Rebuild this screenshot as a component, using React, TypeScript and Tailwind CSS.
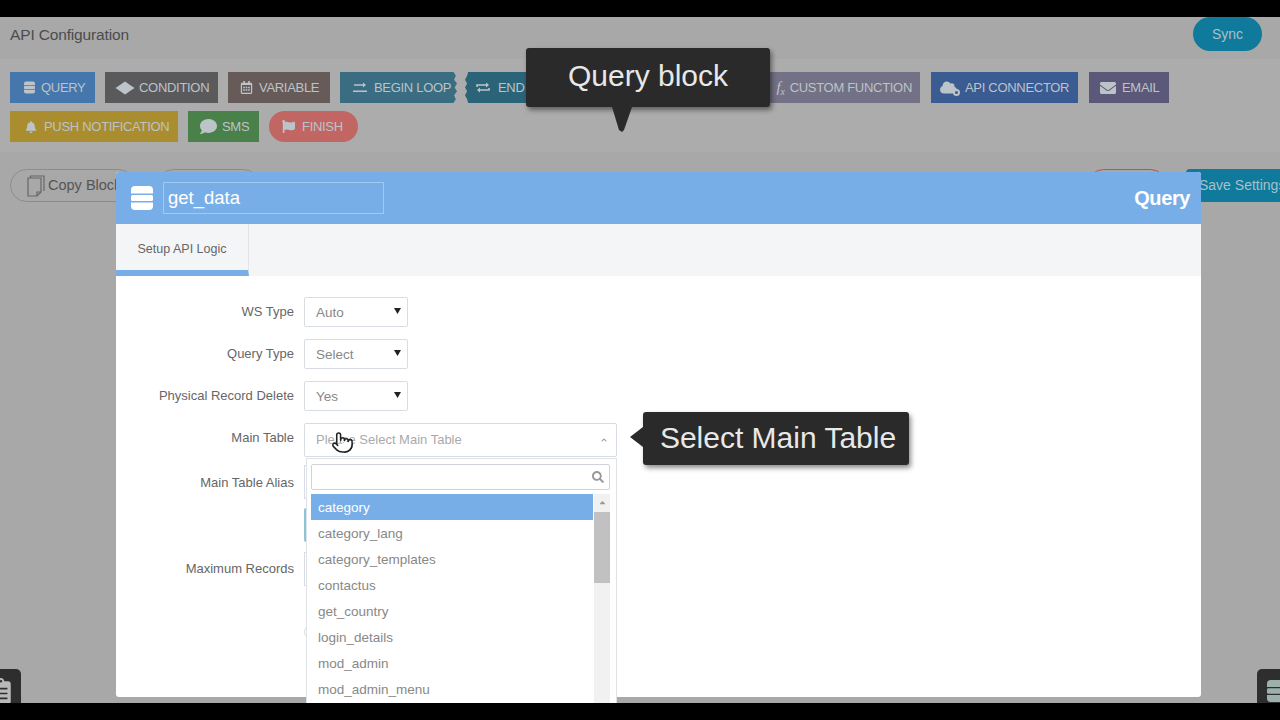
import { Pointer } from "lucide-react";
import {
  FaRegCalendarAlt,
  FaBell,
  FaComment,
  FaFlag,
  FaCloud,
  FaEnvelope,
  FaSearch,
  FaChevronUp,
  FaCaretUp,
  FaClipboardList,
} from "react-icons/fa";

const SANS = "font-['Liberation_Sans',Arial,sans-serif]";

const Diamond = () => (
  <svg width="20" height="14" viewBox="0 0 20 14" className="fill-current">
    <path d="M10 0.5 19.5 7 10 13.5 0.5 7z" />
  </svg>
);

// three stacked disks, flatter than the fa database glyph
const Disks = ({ w, h, className = "" }: { w: number; h: number; className?: string }) => (
  <svg width={w} height={h} viewBox="0 0 22 24" className={`fill-current shrink-0 ${className}`}>
    <path d="M4 0h14a4 4 0 0 1 4 4v3.5H0V4a4 4 0 0 1 4-4z" />
    <rect y="9" width="22" height="6" rx="1.5" />
    <path d="M0 16.5h22V20a4 4 0 0 1-4 4H4a4 4 0 0 1-4-4z" />
  </svg>
);

const LoopIcon = ({ flat = false }: { flat?: boolean }) => (
  <svg width="14" height="11" viewBox="0 0 14 11" fill="none" stroke="currentColor" strokeWidth="1.6" className="shrink-0">
    <path d={flat ? "M1 3h9" : "M1 5V3h9"} />
    <path d="M10 0.5 13 3l-3 2.5z" fill="currentColor" stroke="none" />
    <path d={flat ? "M0 9.2h14" : "M13 6v2H4"} />
    {!flat && <path d="M4 5.500 1 8l3 2.500z" fill="currentColor" stroke="none" />}
  </svg>
);

const CloudGear = () => (
  <span className="relative w-[20px] h-[17px] shrink-0">
    <FaCloud size={17} />
    <span className="absolute right-0 bottom-0 w-[7px] h-[7px] rounded-full border-2 border-current bg-[#3b5b93]" />
  </span>
);

const CopyIcon = () => (
  <svg width="18" height="22" viewBox="0 0 18 22" fill="none" stroke="#666" strokeWidth="1.2" className="shrink-0">
    <path d="M3.5 3V1h13.5v15" />
    <path d="M1 3h13v14l-4 4H1z" />
    <path d="M14 17h-4v4" />
  </svg>
);

const Block = ({ w, bg, icon, label, className = "" }: { w: string; bg: string; icon?: React.ReactNode; label?: string; className?: string }) => (
  <div className={`${w} ${bg} ${className} h-[31px] flex items-center text-[13px] tracking-[-0.3px] text-[#bcc3c9] whitespace-nowrap shrink-0`}>
    {icon}
    {label && <span>{label}</span>}
  </div>
);

const Tooltip = ({ children, className }: { children: React.ReactNode; className: string }) => (
  <div className={`absolute bg-[#2a2a2a] rounded-[3px] shadow-[2px_3px_5px_rgba(0,0,0,0.45)] text-[#e8e8e8] text-[30px] flex items-center justify-center ${className}`}>
    {children}
  </div>
);

const FormRow = ({ label, children, mb = "mb-3", labelClass = "" }: { label: string; children: React.ReactNode; mb?: string; labelClass?: string }) => (
  <div className={`flex items-center ${mb}`}>
    <div className={`w-[178px] text-right text-[13px] text-[#666] shrink-0 ${labelClass}`}>{label}</div>
    <div className="ml-[10px]">{children}</div>
  </div>
);

const SelectBox = ({ value }: { value: string }) => (
  <div className="w-[104px] h-[30px] border border-[#d8dde3] rounded-[2px] flex items-center justify-between pl-[11px] pr-[6px] text-[13.5px] text-[#888]">
    <span className="pt-[2px]">{value}</span>
    <svg width="7" height="6" viewBox="0 0 7 6" className="mb-[3px]">
      <path d="M0 0h7L3.5 6z" fill="#222" />
    </svg>
  </div>
);

const tables = [
  "category",
  "category_lang",
  "category_templates",
  "contactus",
  "get_country",
  "login_details",
  "mod_admin",
  "mod_admin_menu",
];

export default function App() {
  return (
    <div className={`w-[1280px] h-[720px] flex flex-col bg-black overflow-hidden ${SANS}`}>
      <div className="h-[17px] shrink-0 bg-black" />

      <main className="relative flex-1 bg-[#a8a8a8] overflow-hidden">
        {/* Page behind the dialog */}
        <div className="h-[42px] flex items-start justify-between pl-[10px] pr-[18px]">
          <div className="text-[15.5px] text-[#4c4c4c] mt-[6px] tracking-[-0.15px]">API Configuration</div>
          <div className="w-[69px] h-[34px] rounded-full bg-[#0f7a9b] text-[#a9c0c9] text-[14px] flex items-center justify-center">Sync</div>
        </div>

        <div className="h-[93px] bg-[#acacac] pt-[13px] pl-[10px] flex flex-col gap-2">
          <div className="flex gap-[10px]">
            <Block w="w-[85px]" bg="bg-[#4577ad]" icon={<Disks w={11} h={13} />} label="QUERY" className="pl-[14px] gap-[6px]" />
            <Block w="w-[113px]" bg="bg-[#5a5a5d]" icon={<Diamond />} label="CONDITION" className="pl-[10px] gap-[4px]" />
            <Block w="w-[102px]" bg="bg-[#675b5a]" icon={<FaRegCalendarAlt size={13} />} label="VARIABLE" className="pl-[12px] gap-[6px]" />
            <Block w="w-[117px]" bg="bg-[#3a6c82]" icon={<LoopIcon flat />} label="BEGIN LOOP" className="pl-[13px] gap-[7px] [clip-path:polygon(0_0,97%_0,99%_12%,97.5%_25%,100%_37%,98%_50%,100%_62%,97.5%_75%,99%_88%,97%_100%,0_100%)]" />
            <Block w="w-[105px]" bg="bg-[#2b6479]" icon={<LoopIcon />} label="END LOOP" className="-ml-[2px] pl-[11px] gap-[8px] [clip-path:polygon(3%_0,100%_0,100%_100%,3%_100%,2%_88%,0_75%,2%_62%,0_50%,2%_37%,0_25%,2%_12%)]" />
            <Block w="w-[167px]" bg="bg-[#5a5a5d]" />
            <Block w="w-[163px]" bg="bg-[#737185]" icon={<span className="font-['Liberation_Serif',serif] italic text-[15px]">f<sub className="text-[10px]">x</sub></span>} label="CUSTOM FUNCTION" className="justify-end gap-[5px] pr-[8px]" />
            <Block w="w-[147px]" bg="bg-[#3b5b93]" icon={<CloudGear />} label="API CONNECTOR" className="ml-px pl-[9px] gap-[5px]" />
            <Block w="w-[80px]" bg="bg-[#5b5879]" icon={<FaEnvelope size={16} />} label="EMAIL" className="ml-px pl-[11px] gap-[6px]" />
          </div>
          <div className="flex gap-[10px]">
            <Block w="w-[168px]" bg="bg-[#a98d2f]" icon={<FaBell size={12} />} label="PUSH NOTIFICATION" className="pl-[15px] gap-[7px]" />
            <Block w="w-[71px]" bg="bg-[#4a8049]" icon={<FaComment size={17} />} label="SMS" className="pl-[12px] gap-[5px]" />
            <Block w="w-[89px]" bg="bg-[#c16663]" icon={<FaFlag size={13} />} label="FINISH" className="pl-[13px] gap-[7px] rounded-full" />
          </div>
        </div>

        <div className="mt-[17px] flex items-start pl-[10px]">
          <div className="w-[125px] h-[33px] shrink-0 rounded-full border border-[#8c8c8c] flex items-center pl-[16px] gap-[3px] text-[14.5px] text-[#555] overflow-hidden">
            <CopyIcon />
            <span className="whitespace-nowrap">Copy Block</span>
          </div>
          <div className="ml-[22px] w-[103px] h-[33px] shrink-0 rounded-full border border-[#8c8c8c]" />
          <div className="ml-[827px] w-[80px] h-[33px] shrink-0 rounded-full border border-[#b5554f]" />
          <div className="ml-[19px] w-[110px] h-[33px] shrink-0 rounded-l-[4px] bg-[#0f7a9b] text-[#a9c0c9] text-[14px] flex items-center pl-[13px] whitespace-nowrap">Save Settings</div>
        </div>

        {/* Query dialog */}
        <div className="absolute left-[116px] top-[155px] w-[1085px] h-[525px] bg-white rounded-[3px]">
          <div className="h-[52px] bg-[#78aee8] rounded-t-[3px] flex items-center pl-[15px] pr-[11px]">
            <Disks w={22} h={24} className="text-white" />
            <div className="ml-[10px] w-[221px] h-[32px] border border-[#a4c9f0] text-white text-[18.500px] flex items-center pl-[4px]">get_data</div>
            <div className="ml-auto text-white text-[20px] font-bold tracking-[-0.4px]">Query</div>
          </div>

          <div className="h-[52px] bg-[#f4f5f7] flex">
            <div className="w-[133px] h-full border-r border-[#e2e4e8] border-b-[6px] border-b-[#78aee8] flex items-center justify-center pt-[5px] text-[12.500px] text-[#666]">
              Setup API Logic
            </div>
          </div>

          <div className="pt-[21px]">
            <FormRow label="WS Type"><SelectBox value="Auto" /></FormRow>
            <FormRow label="Query Type"><SelectBox value="Select" /></FormRow>
            <FormRow label="Physical Record Delete"><SelectBox value="Yes" /></FormRow>

            <FormRow label="Main Table" mb="mb-2" labelClass="mb-[5px]">
              <div className="relative w-[313px] h-[34px] border border-[#d8dde3] rounded-[2px] flex items-center justify-between pl-[11px] pr-[9px] text-[13px] text-[#aaa]">
                <span>Please Select Main Table</span>
                <FaChevronUp size={6} className="text-[#999]" />
                <Pointer size={23} strokeWidth={1.6} className="absolute left-[26px] top-[7px] z-20 fill-white text-[#222]" />

                {/* Open dropdown */}
                <div className="absolute left-[1px] top-[34px] z-10 w-[311px] h-[250px] bg-white border border-[#dfe3e8] px-[4px] pt-[5px]">
                  <div className="h-[26px] w-[299px] border border-[#cfd4da] rounded-[2px] flex items-center justify-end pr-[5px]">
                    <FaSearch size={12} className="text-[#999]" />
                  </div>
                  <div className="mt-[4px] flex">
                    <div className="w-[282px]">
                      {tables.map((t, i) => (
                        <div key={t} className={`h-[26px] flex items-center pl-[7px] pt-[2px] text-[13.500px] ${i === 0 ? "bg-[#78aee8] text-white" : "text-[#888]"}`}>
                          {t}
                        </div>
                      ))}
                    </div>
                    <div className="ml-[1px] w-[16px] h-[240px] bg-[#f1f1f1] flex flex-col items-center">
                      <FaCaretUp size={9} className="text-[#999] mt-[4px]" />
                      <div className="mt-[5px] w-full h-[71px] bg-[#c1c1c1]" />
                    </div>
                  </div>
                </div>
              </div>
            </FormRow>

            <FormRow label="Main Table Alias" mb="mb-[9px]" labelClass="pt-[1px]">
              <div className="w-[200px] h-[34px] border border-[#d8dde3]" />
            </FormRow>
            <div className="ml-[188px] w-[100px] h-[34px] bg-[#8fc3d6] rounded-[2px] mb-[10px]" />
            <FormRow label="Maximum Records" mb="mb-[39px]">
              <div className="w-[200px] h-[34px] border border-[#d8dde3]" />
            </FormRow>
            <div className="ml-[188px] w-[60px] h-[14px] rounded-full border border-[#d8dde3]" />
          </div>
        </div>

        {/* Corner handles */}
        <div className="absolute left-0 bottom-0 w-[21px] h-[34px] bg-[#2e2e2e] rounded-tr-[5px] overflow-hidden flex items-end">
          <FaClipboardList size={26} className="text-[#b9b9b9] -ml-[12px] -mb-[1px] shrink-0" />
        </div>
        <div className="absolute right-0 bottom-0 w-[23px] h-[34px] bg-[#2e2e2e] rounded-tl-[5px] overflow-hidden flex items-end pl-[10px]">
          <Disks w={20} h={24} className="text-[#9db0ac]" />
        </div>

        {/* Walkthrough callouts */}
        <Tooltip className="left-[526px] top-[31px] w-[244px] h-[59px] pb-[5px]">
          Query block
          <div className="absolute left-[86px] top-[59px] w-[20px] h-[25px] bg-[#2a2a2a] [clip-path:polygon(0_0,100%_0,60%_92%,50%_100%,35%_92%)]" />
        </Tooltip>
        <Tooltip className="left-[643px] top-[395px] w-[266px] h-[53px] pl-[4px] pb-[2px]">
          Select Main Table
          <div className="absolute -left-[13px] top-[15px] w-[13px] h-[20px] bg-[#2a2a2a] [clip-path:polygon(100%_0,100%_100%,0_50%)]" />
        </Tooltip>
      </main>

      <div className="h-[17px] shrink-0 bg-black" />
    </div>
  );
}
